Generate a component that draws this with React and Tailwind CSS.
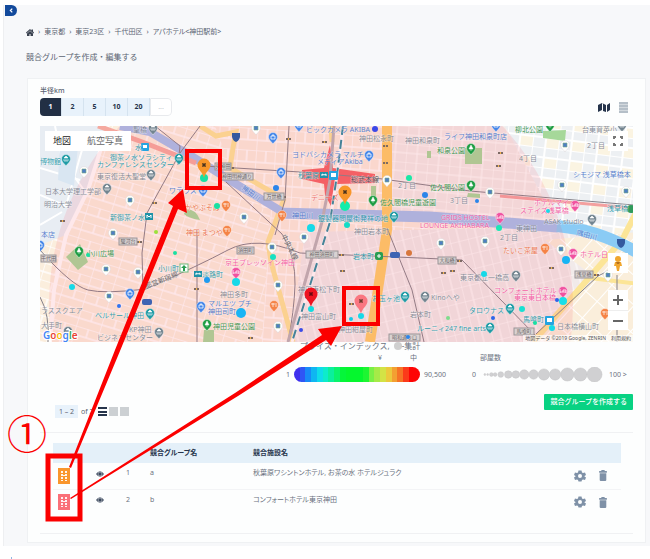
import React, { useState } from "react";

const BLUE = "#4a74c9";
const TEAL = "#2496a8";
const GREEN = "#2f8f45";
const GRAY = "#7d8490";
const PINK = "#f4559f";
const ORANGE = "#ec6f45";

// [text, x, y, color]
const labels = [
  ["聖橋", 133, 132, GRAY],
  ["水", 135, 150, TEAL],
  ["御茶ノ水ソラシティ", 110, 160, TEAL],
  ["カンファレンスセンター", 97, 167, TEAL],
  ["博物館", 40, 164, TEAL],
  ["東京復活大聖堂", 97, 179, GRAY],
  ["日本大学理工学部", 45, 194, GRAY],
  ["明治大学", 44, 207, GRAY],
  ["新御茶ノ水", 110, 220, TEAL],
  ["ワテラス", 169, 193, BLUE],
  ["かやぶそば", 185, 210, ORANGE],
  ["神田 まつや", 186, 235, ORANGE],
  ["本店", 41, 237, BLUE],
  ["小川広場", 86, 256, GREEN],
  ["小川町", 158, 271, TEAL],
  ["淡路町", 202, 277, TEAL],
  ["ラススクエア", 41, 313, GRAY],
  ["ベルサール神田", 95, 318, TEAL],
  ["KP神田", 129, 332, GRAY],
  ["ビジネスセンター", 97, 340, GRAY],
  ["大手町", 41, 328, GRAY],
  ["ビックカメラ AKIBA", 306, 132, BLUE],
  ["神田松永町", 359, 141, GRAY],
  ["神田和泉町", 405, 143, GRAY],
  ["ヨドバシカメラ マルチ", 292, 157, BLUE],
  ["メディアAkiba", 317, 164, BLUE],
  ["秋葉原", 298, 178, TEAL],
  ["総武本線", 351, 182, "#4b4b52"],
  ["デニーズ", 311, 200, "#ef6a64"],
  ["神田川", 292, 218, BLUE],
  ["佐久間橋児童遊園", 380, 205, GREEN],
  ["銀製器問屋街発祥の地", 318, 221, TEAL],
  ["神田岩本町", 354, 234, GRAY],
  ["2丁目", 398, 188, GRAY],
  ["京王プレッソイン神田", 225, 265, PINK],
  ["神田多町", 220, 297, GRAY],
  ["マルエツ プチ", 208, 306, BLUE],
  ["神田司町", 208, 314, BLUE],
  ["神田児童公園", 213, 329, GREEN],
  ["神田東松下町", 298, 292, GRAY],
  ["神田富山町", 301, 319, GRAY],
  ["岩本町", 353, 259, TEAL],
  ["お玉ヶ池", 372, 301, TEAL],
  ["岩本町", 410, 317, GRAY],
  ["神田紺屋町", 338, 332, GRAY],
  ["ルーニィ247 fine arts", 417, 331, TEAL],
  ["ライフ神田和泉町店", 444, 139, BLUE],
  ["柳北公園", 515, 132, GREEN],
  ["台東育英小", 582, 132, GRAY],
  ["和泉公園", 437, 153, GREEN],
  ["4丁目", 519, 161, GRAY],
  ["2丁目", 587, 148, GRAY],
  ["シモジマ 浅草橋本", 573, 177, BLUE],
  ["佐久間公園", 430, 190, GREEN],
  ["3丁目", 450, 203, GRAY],
  ["ホテルマイ", 534, 205, PINK],
  ["ステイズ浅草橋", 520, 213, PINK],
  ["浅草橋", 607, 211, TEAL],
  ["GRIDS HOSTEL", 441, 220, PINK],
  ["LOUNGE AKIHABARA", 420, 228, PINK],
  ["ASAK studio", 544, 224, GRAY],
  ["東神田", 516, 231, GRAY],
  ["2丁目", 500, 240, GRAY],
  ["たいこ茶屋", 503, 253, ORANGE],
  ["ホテル日", 580, 257, PINK],
  ["東京都立一橋高", 460, 280, GRAY],
  ["コンフォートホテル", 494, 293, PINK],
  ["東京東日本橋", 514, 300, PINK],
  ["Kinoへや", 431, 300, GRAY],
  ["タロウナス", 469, 313, TEAL],
  ["馬喰町", 523, 322, TEAL],
  ["日本橋横山町", 557, 329, GRAY],
];

const pinColors = {
  shop: "#4385e8",
  gray: "#72848f",
  teal: "#1f9ba5",
  park: "#1f9d44",
  food: "#f58346",
  hotel: "#f052a0",
  poi: "#ffffff",
};

// [kind, x, y]
const pins = [
  ["gray", 153, 128], ["teal", 179, 158], ["teal", 66, 159], ["poi", 84, 171],
  ["gray", 151, 174], ["gray", 107, 188], ["poi", 130, 200], ["shop", 203, 190],
  ["food", 226, 205], ["food", 227, 230], ["poi", 113, 233], ["shop", 40, 245],
  ["park", 79, 251], ["poi", 106, 269], ["poi", 138, 272], ["poi", 109, 296],
  ["shop", 130, 293], ["teal", 150, 313], ["gray", 159, 332], ["gray", 68, 331],
  ["shop", 201, 306], ["park", 207, 324], ["hotel", 236, 272], ["shop", 273, 137],
  ["shop", 299, 125], ["shop", 369, 155], ["shop", 281, 172], ["food", 282, 215],
  ["poi", 244, 217], ["poi", 256, 128], ["park", 373, 200], ["teal", 394, 216],
  ["poi", 387, 180], ["poi", 272, 247], ["poi", 278, 285], ["poi", 278, 326],
  ["poi", 304, 237], ["food", 274, 305], ["teal", 405, 296], ["gray", 425, 296],
  ["shop", 496, 125], ["park", 550, 125], ["gray", 622, 125], ["park", 471, 148],
  ["poi", 565, 145], ["park", 471, 185], ["poi", 490, 192], ["poi", 562, 185],
  ["poi", 626, 191], ["hotel", 575, 205], ["hotel", 500, 217], ["gray", 592, 219],
  ["poi", 441, 243], ["poi", 485, 241], ["food", 545, 248], ["poi", 561, 249],
  ["hotel", 573, 253], ["gray", 516, 275], ["hotel", 563, 291], ["teal", 510, 308],
  ["teal", 490, 327], ["food", 605, 313], ["poi", 608, 275],
];

// [x, y, r, color]
const dots = [
  [204, 178, 4, "#19e0a2"], [217, 206, 3, "#19e0a2"], [88, 255, 2, "#19e0a2"],
  [72, 287, 3, "#16d9e8"], [175, 253, 2, "#19e0a2"], [207, 280, 3, "#1f9bf0"],
  [119, 306, 2, "#3174f0"], [375, 129, 3, "#3b48e8"], [276, 188, 3, "#2b85ea"],
  [345, 206, 5, "#12edab"], [311, 228, 4, "#16d9e8"], [347, 225, 3, "#12dcc6"],
  [409, 178, 3, "#19e8a6"], [273, 257, 3, "#19e0c2"], [236, 282, 4, "#16d9e8"],
  [241, 313, 5, "#18b4f4"], [311, 309, 3, "#12dce0"], [361, 316, 3, "#16d9e8"],
  [351, 319, 2, "#16c9e8"], [301, 330, 2, "#3a4be8"], [408, 337, 2, "#2b85ea"],
  [409, 253, 3, "#d8773c"], [477, 201, 2, "#2b85ea"], [499, 228, 3, "#19e8b6"],
  [548, 211, 2, "#16d9e8"], [566, 260, 4, "#18b4f4"], [484, 274, 3, "#16d9e8"],
  [563, 301, 4, "#16dfe8"], [557, 300, 2, "#2b65ea"], [522, 309, 3, "#19e0d2"],
  [493, 318, 2, "#2b65ea"], [552, 328, 3, "#16d9e8"], [535, 323, 2, "#19e0a2"],
  [156, 232, 2, "#9be23c"], [425, 195, 3, "#2b85ea"], [448, 318, 2, "#7fdc8c"],
];

// street name plates: [text, x, y, width]
const plates = [
  ["駿河台", 119, 238, 18], ["千代田", 41, 255, 15], ["神田明神通り", 221, 173, 32],
  ["外神田", 215, 163, 16], ["万世橋", 264, 193, 20], ["須田町", 237, 247, 17],
  ["神田須田町", 306, 251, 32], ["大和橋", 438, 257, 18], ["浅草橋", 575, 271, 18],
  ["馬喰町", 514, 328, 20], ["昭和通り口", 389, 334, 31],
];

// traffic signals
const signals = [
  [63, 221], [155, 203], [289, 139], [325, 142], [386, 146], [386, 163], [284, 197],
  [501, 153], [499, 166], [343, 271], [342, 255], [444, 273], [453, 271], [552, 268],
  [460, 261], [197, 289], [251, 338], [140, 242], [232, 168], [597, 275], [352, 304],
];

function PinGlyph({ kind }) {
  if (kind === "poi") return <path d="M-2-2h4v4h-4z" fill="#4f7fc4" stroke="#7cab84" strokeWidth="0.600" />;
  if (kind === "food") return <path d="M-2-2v2M-1-2v4M0-2v2M2-2v4" stroke="#fff" fill="none" strokeWidth="0.700" />;
  if (kind === "hotel") return <path d="M-3-2v4M-3 1h6v-2h-3v2M3 1v1" stroke="#fff" fill="none" strokeWidth="0.800" />;
  if (kind === "park") return <path d="M0-3l2 4h-4zM0 1v2" stroke="#fff" fill="#fff" strokeWidth="0.500" />;
  if (kind === "shop") return <path d="M-2-1h4v3h-4zM-1-1q1-3 2 0" stroke="#fff" fill="none" strokeWidth="0.800" />;
  return <path d="M0-3l2 2h-4zM-2 0v2M0 0v2M2 0v2M-2 2h4" stroke="#fff" fill="#fff" strokeWidth="0.600" />;
}

function Pin({ kind, x, y }) {
  return (
    <g transform={`translate(${x} ${y})`}>
      <path
        d="M0 7C-1 5-4.500 3-4.500 0A4.500 4.500 0 0 1 4.500 0C4.500 3 1 5 0 7z"
        fill={pinColors[kind]}
        stroke={kind === "poi" ? "#d3ccd0" : "#ffffff"}
        strokeWidth="0.400"
      />
      <PinGlyph kind={kind} />
    </g>
  );
}

function Marker({ x, y, color, core }) {
  return (
    <g transform={`translate(${x} ${y})`}>
      <path d="M0 13C-1 7-6.500 5-6.500 0A6.500 6.500 0 0 1 6.500 0C6.500 5 1 7 0 13z" fill={color} />
      <path d="M-1-1h2v2h-2zM0-2v4M-2 0h4M-2-2l4 4M2-2l-4 4" fill={core} stroke={core} strokeWidth="0.700" />
    </g>
  );
}

function CityMap() {
  return (
    <svg
      viewBox="40 126 593 216"
      preserveAspectRatio="xMidYMid slice"
      className="block h-[216px] w-full font-['Noto_Sans','Noto_Sans_CJK_JP',sans-serif] text-[7px]"
      role="img"
      aria-label="地図"
    >
      <defs>
        <pattern id="west" width="24" height="17" patternUnits="userSpaceOnUse" patternTransform="rotate(17)">
          <rect width="24" height="17" fill="#fbeedd" />
          <path d="M0 0H24M0 0V17M13 0V9M0 9H24" stroke="#ffffff" strokeWidth="1.500" fill="none" />
        </pattern>
        <pattern id="center" width="19" height="22" patternUnits="userSpaceOnUse" patternTransform="rotate(4)">
          <rect width="19" height="22" fill="#fbecdd" />
          <path d="M0 0H19M0 0V22M0 12H19M10 0V12" stroke="#ffffff" strokeWidth="1.500" fill="none" />
        </pattern>
        <pattern id="south" width="18" height="15" patternUnits="userSpaceOnUse" patternTransform="rotate(-14)">
          <rect width="18" height="15" fill="#f1eaea" />
          <path d="M0 0H18M0 0V15M9 0V15" stroke="#ffffff" strokeWidth="1" fill="none" />
        </pattern>
        <pattern id="northeast" width="22" height="18" patternUnits="userSpaceOnUse" patternTransform="rotate(5)">
          <rect width="22" height="18" fill="#f3ebe8" />
          <path d="M0 0H22M0 0V18M0 9H22M11 0V18" stroke="#ffffff" strokeWidth="1" fill="none" />
        </pattern>
        <pattern id="east" width="26" height="20" patternUnits="userSpaceOnUse" patternTransform="rotate(7)">
          <rect width="26" height="20" fill="#edf0f3" />
          <rect x="13" y="10" width="13" height="10" fill="#fbf4e2" />
          <path d="M0 0H26M0 0V20M0 10H26M13 0V20" stroke="#ffffff" strokeWidth="2" fill="none" />
        </pattern>
        <pattern id="southeast" width="15" height="22" patternUnits="userSpaceOnUse" patternTransform="rotate(42)">
          <rect width="15" height="22" fill="#faeedb" />
          <path d="M0 0H15M0 0V22" stroke="#ffffff" strokeWidth="2" fill="none" />
        </pattern>
      </defs>

      {/* blocks and streets */}
      <rect x="40" y="126" width="593" height="216" fill="url(#center)" />
      <path d="M40 126H215L235 180L270 215L262 342H40z" fill="url(#west)" />
      <path d="M305 232L640 225V342H290z" fill="url(#south)" />
      <path d="M392 126H560V226L392 217z" fill="url(#northeast)" />
      <path d="M505 126H640V240L558 226z" fill="url(#east)" />
      <path d="M545 240L640 232V342H530L596 278z" fill="url(#southeast)" />
      <path d="M40 126H108L88 190L66 235L40 245z" fill="#e8edf3" />
      <path d="M40 195L66 206L82 150M40 225L62 212M55 126L62 160L84 190M40 168L80 180" stroke="#fff" strokeWidth="2" fill="none" />
      <path d="M108 126L88 190L66 235L54 290L50 342" stroke="#fff" strokeWidth="4" fill="none" />
      <path d="M60 142L78 146L74 186L58 180z" fill="#d9e6f2" />

      {/* parks */}
      <g fill="#a6d89a">
        <path d="M80 244L88 262L78 270L66 257z" />
        <path d="M186 209Q196 209 200 220Q188 218 184 214z" />
        <path d="M465 148H482V164H465zM543 131L566 130L565 141L543 138zM468 193L480 194L480 198L467 197z" />
        <path d="M204 330H214V342H203zM371 186H376V204H371zM427 151H431V158H427z" />
      </g>

      {/* main roads */}
      <g fill="none" stroke="#fce597">
        <path d="M284 199L268 242L271 262L293 342" strokeWidth="5" />
        <path d="M200 126L216 136L236 132L233 148L230 168L284 199" strokeWidth="5" />
        <path d="M331 126L332 142" strokeWidth="5" />
        <path d="M640 205L622 240L533 342" strokeWidth="6" />
        <path d="M590 278L640 284" strokeWidth="4" />
      </g>

      {/* river */}
      <path d="M120 126L150 132L193 157L236 184L281 211" stroke="#a5c0ee" strokeWidth="8" fill="none" />
      <path d="M278 213L430 217L558 227" stroke="#a5c0ee" strokeWidth="11" fill="none" />
      <path d="M557 226Q600 230 640 254" stroke="#8acbf5" strokeWidth="12" fill="none" />
      <path d="M387 126V230L370 342" stroke="#fdcd68" strokeWidth="10" fill="none" />

      {/* railways */}
      <path d="M98 126L145 143L196 163" stroke="#f5a99f" strokeWidth="5" fill="none" />
      <path d="M330 145L333 168L375 174V183L337 184L331 206L325 195L324 184L302 179V170L324 168z" fill="#f46366" />
      <path d="M500 196L633 208" stroke="#f3a09f" strokeWidth="3" fill="none" />
      <g fill="none" stroke="#85828a" strokeWidth="1">
        <path d="M155 126L180 146L178 165M200 126L180 153L147 213L142 253L143 290" />
        <path d="M40 250Q72 286 88 290T146 289Q200 265 228 250T300 253L420 258L462 260L536 336" />
        <path d="M204 166L300 172L375 178L470 191L633 205" />
        <path d="M289 126L285 200L275 235M197 230V342M40 297Q50 315 48 342" />
        <path d="M387 228L412 290L424 342M536 334L598 276L614 268M617 275V342" />
        <path d="M226 182L282 234Q296 258 295 285T288 342" />
      </g>
      <path d="M334 126L330 180L322 222L288 342" stroke="#b9b2b7" strokeWidth="3" fill="none" />
      <path d="M343 126L337 175L330 222L292 342" stroke="#ffffff" strokeWidth="3" fill="none" />
      <path d="M343 126L337 175L330 222L292 342" stroke="#2b8ca0" strokeWidth="2" strokeDasharray="9 5" fill="none" />

      {/* search radius */}
      <circle cx="311" cy="305" r="262" fill="#fa4a62" fillOpacity="0.130" />

      {signals.map(([x, y], i) => (
        <g key={i}>
          <rect x={x - 3} y={y - 1} width="5" height="2" fill="#7d6a64" />
          <rect x={x - 1} y={y - 1} width="1" height="2" fill="#f3b24a" />
        </g>
      ))}

      {plates.map(([text, x, y, w], i) => (
        <g key={i}>
          <rect x={x} y={y} width={w} height="7" fill="#d9d2d2" stroke="#9a9496" strokeWidth="1" />
          <text x={x + w / 2} y={y + 5} textAnchor="middle" fontSize="5" fill="#6b6668">{text}</text>
        </g>
      ))}

      {/* station badges */}
      <g>
        <rect x="141" y="143" width="8" height="8" rx="1" fill="#25a4e0" />
        <path d="M143 145h4v3h-4z" fill="#fff" />
        <rect x="145" y="213" width="8" height="7" fill="#1f93a8" />
        <path d="M147 218v-3l2 2l2-2v3" stroke="#fff" fill="none" strokeWidth="1" />
        <rect x="320" y="172" width="8" height="6" fill="#1f93a8" />
        <path d="M322 176v-2l2 1l2-1v2" stroke="#fff" fill="none" strokeWidth="1" />
        <rect x="329" y="171" width="9" height="9" rx="1" fill="#25a4e0" />
        <path d="M331 173h5v4h-5z" fill="#fff" />
        <rect x="194" y="271" width="8" height="6" fill="#1f93a8" />
        <path d="M196 275v-2l2 1l2-1v2" stroke="#fff" fill="none" strokeWidth="1" />
        <rect x="545" y="316" width="9" height="9" rx="1" fill="#25a4e0" />
        <path d="M547 318h5v4h-5z" fill="#fff" />
        <rect x="375" y="252" width="8" height="8" rx="2" fill="#2a9d52" />
        <path d="M377 256h4M379 254v4" stroke="#fff" strokeWidth="1" />
        <rect x="180" y="264" width="8" height="8" fill="#fff" stroke="#6cbb7f" strokeWidth="1" />
        <path d="M184 265l3 3h-2v3h-2v-3h-2z" fill="#2a9d52" />
        <rect x="142" y="299" width="10" height="6" rx="2" fill="#3d63b3" />
        <rect x="390" y="252" width="10" height="6" rx="2" fill="#3d63b3" />
        <path d="M232 133h8v4q-1 4-4 5q-3-1-4-5zM617 239h8v4q-1 4-4 5q-3-1-4-5z" fill="#33599f" />
        <circle cx="631" cy="209" r="4" fill="#2f9b5b" />
      </g>

      {pins.map(([kind, x, y], i) => <Pin key={i} kind={kind} x={x} y={y} />)}

      <g stroke="#ffffff" strokeWidth="1" strokeOpacity="0.500" paintOrder="stroke" opacity="0.900">
        {labels.map(([text, x, y, color], i) => (
          <text key={i} x={x} y={y} fill={color}>{text}</text>
        ))}
        <text transform="translate(241 189) rotate(36)" fill={BLUE}>神田川</text>
        <text transform="translate(146 289) rotate(-22)" fill="#5b575c">都営新宿線</text>
        <text transform="translate(281 236) rotate(62)" fill="#5b575c">中央本線</text>
        <text transform="translate(576 235) rotate(14)" fill={BLUE}>隅田川</text>
      </g>

      {dots.map(([x, y, r, color], i) => <circle key={i} cx={x} cy={y} r={r} fill={color} />)}

      <Marker x={204} y={165} color="#f8962a" core="#4b3320" />
      <Marker x={345} y={192} color="#f8962a" core="#4b3320" />
      <Marker x={311} y={294} color="#ee1320" core="#6d0710" />
      <Marker x={361} y={301} color="#fa7681" core="#6d3a2c" />

      <g fontSize="10" fontWeight="600" stroke="#ffffff" strokeWidth="2" paintOrder="stroke">
        <text x="43" y="339">
          <tspan fill="#4285f4">G</tspan>
          <tspan fill="#ea4335">o</tspan>
          <tspan fill="#fbbc05">o</tspan>
          <tspan fill="#4285f4">g</tspan>
          <tspan fill="#34a853">l</tspan>
          <tspan fill="#ea4335">e</tspan>
        </text>
      </g>
      <rect x="523" y="335" width="110" height="7" fill="#ffffff" fillOpacity="0.650" />
      <text x="631" y="340" textAnchor="end" fontSize="5" fill="#555">
        地図データ ©2019 Google, ZENRIN　利用規約
      </text>
    </svg>
  );
}

function MapPanel() {
  return (
    <div className="relative mt-[10px]">
      <CityMap />
      <div className="absolute left-[5px] top-[5px] flex h-5 items-center bg-white text-[9px] text-[#666]">
        <button className="px-2 text-[#222]">地図</button>
        <button className="px-2">航空写真</button>
      </div>
      <button aria-label="全画面表示" className="absolute right-[5px] top-[5px] flex size-5 items-center justify-center bg-white">
        <svg viewBox="0 0 12 12" className="size-3" fill="none" stroke="#777" strokeWidth="2">
          <path d="M2 4V2H4M8 2H10V4M10 8V10H8M4 10H2V8" />
        </svg>
      </button>
      <div className="absolute right-[5px] top-[127px] flex flex-col gap-[17px]">
        <button aria-label="ストリートビュー" className="flex size-5 items-center justify-center bg-white">
          <svg viewBox="0 0 12 16" className="h-4 w-3">
            <circle cx="6" cy="4" r="3" fill="#f0a52c" />
            <path d="M3 7h6l1 4H8l-1 5H5l-1-5H2z" fill="#f0a52c" />
            <path d="M4 7h4l-1 2H5z" fill="#b5701d" />
          </svg>
        </button>
        <div className="flex flex-col bg-white">
          <button aria-label="拡大" className="flex size-5 items-center justify-center">
            <svg viewBox="0 0 10 10" className="size-[10px]" stroke="#666" strokeWidth="2"><path d="M0 5H10M5 0V10" /></svg>
          </button>
          <button aria-label="縮小" className="flex size-5 items-center justify-center border-t border-[#eee]">
            <svg viewBox="0 0 10 10" className="size-[10px]" stroke="#666" strokeWidth="2"><path d="M0 5H10" /></svg>
          </button>
        </div>
      </div>
    </div>
  );
}

const scale = [
  "#3f30ee", "#2f55f5", "#178af7", "#0fb6f1", "#0fdcea", "#0deccb", "#0bef9d", "#09f36c",
  "#05f63a", "#05f72e", "#05f72e", "#05f72e", "#1df632", "#79f046", "#a6ea48", "#d3e345",
  "#ecc93c", "#f3a032", "#f67426", "#fb3a1a", "#fe0505", "#fe0505",
];

// [cx, r]
const roomDots = [
  [3, 1], [6, 1], [10, 2], [14, 2], [20, 3], [28, 4], [36, 4], [45, 5],
  [55, 5], [66, 6], [78, 6], [91, 7], [105, 7], [120, 8],
];

function Legend() {
  return (
    <div className="flex justify-end gap-5 text-[7px] leading-[8px] text-[#6b7280]">
      <div className="w-[166px]">
        <div className="flex items-center whitespace-nowrap pl-[14px] text-[8px]">
          プライス・インデックス,
          <span className="ml-1 size-2 rounded-full bg-[#cfcfcf]" />
          -集計
        </div>
        <div className="mt-1 flex pl-[92px]">
          <span className="w-8">¥</span>
          <span>中</span>
        </div>
        <div className="mt-[5px] flex items-center gap-1">
          <span>1</span>
          <div className="flex h-[15px] w-[126px] overflow-hidden rounded-full">
            {scale.map((c, i) => <span key={i} className="flex-1" style={{ background: c }} />)}
          </div>
          <span>90,500</span>
        </div>
      </div>
      <div className="w-[161px]">
        <div className="mt-3 pl-2">部屋数</div>
        <div className="mt-[5px] flex items-center gap-[2px]">
          <span>0</span>
          <svg viewBox="0 0 129 16" className="h-[15px] w-[129px]" fill="#d0d0d2" stroke="#c2c2c5" strokeWidth="0.500">
            {roomDots.map(([cx, r]) => <circle key={cx} cx={cx} cy="8" r={r} />)}
          </svg>
          <span className="whitespace-nowrap">100 &gt;</span>
        </div>
      </div>
    </div>
  );
}

const groups = [
  { no: 1, name: "a", hotels: "秋葉原ワシントンホテル, お茶の水 ホテルジュラク", bg: "bg-[#f9962d]" },
  { no: 2, name: "b", hotels: "コンフォートホテル東京神田", bg: "bg-[#fa7078]" },
];

function BuildingIcon() {
  return (
    <svg viewBox="0 0 8 10" className="h-[10px] w-2" fill="#ffffff" fillOpacity="0.900" shapeRendering="crispEdges">
      <path d="M1 0h2v2H1zM5 0h2v2H5zM1 3h2v2H1zM5 3h2v2H5zM1 6h2v2H1zM5 6h2v2H5zM1 9h2v1H1zM5 9h2v1H5zM3 4h2v1H3z" />
    </svg>
  );
}

function EyeIcon() {
  return (
    <svg viewBox="0 0 16 12" className="h-[6px] w-2">
      <path d="M0 6Q8-5 16 6Q8 17 0 6z" fill="#3a475c" />
      <circle cx="8" cy="6" r="4" fill="none" stroke="#fff" strokeWidth="1" />
    </svg>
  );
}

function GearIcon() {
  return (
    <svg viewBox="0 0 24 24" className="size-3" fill="#7f91a7">
      <path fillRule="evenodd" d="M9 1h6l1 4 2 1 4-1 2 5-3 2v1l3 2-2 5-4-1-2 1-1 3H9l-1-3-2-1-4 1-2-5 3-2v-1L0 10l2-5 4 1 2-1zM12 8a4 4 0 1 0 0 8a4 4 0 1 0 0-8z" />
    </svg>
  );
}

function TrashIcon() {
  return (
    <svg viewBox="0 0 14 20" className="h-[11px] w-2" fill="#7f91a7">
      <path d="M4 0h6v2h4v3H0V2h4zM1 6h12v12q0 2-2 2H3q-2 0-2-2z" />
    </svg>
  );
}

function GroupTable() {
  return (
    <table className="w-full table-fixed text-left text-[7px] leading-[8px] text-[#6b7280] [font-feature-settings:'palt']">
      <colgroup>
        <col className="w-[43px]" />
        <col className="w-[30px]" />
        <col className="w-6" />
        <col className="w-[103px]" />
        <col />
        <col className="w-7" />
        <col className="w-[22px]" />
      </colgroup>
      <thead className="bg-[#e4f0f9] text-[#26344b]">
        <tr className="h-[20px]">
          <th /><th /><th />
          <th className="font-bold">競合グループ名</th>
          <th className="font-bold">競合施設名</th>
          <th /><th />
        </tr>
      </thead>
      <tbody>
        {groups.map((g) => (
          <tr key={g.no} className="h-[26px] border-b border-[#f3f4f6] last:border-0">
            <td className="pl-[5px]">
              <div className={`flex h-4 w-3 items-center justify-center ${g.bg}`}>
                <BuildingIcon />
              </div>
            </td>
            <td>
              <button aria-label={`${g.name} を表示`} className="flex pb-1"><EyeIcon /></button>
            </td>
            <td className="pb-[5px]">{g.no}</td>
            <td className="pb-[5px]">{g.name}</td>
            <td className="pb-[5px]">{g.hotels}</td>
            <td><button aria-label={`${g.name} を編集`} className="flex pl-[3px]"><GearIcon /></button></td>
            <td><button aria-label={`${g.name} を削除`} className="flex"><TrashIcon /></button></td>
          </tr>
        ))}
      </tbody>
    </table>
  );
}

// 吹き出し・矢印
function Callouts() {
  return (
    <svg viewBox="0 0 650 559" className="pointer-events-none absolute left-0 top-0 h-[559px] w-[650px]">
      <g fill="none" stroke="#fb0000">
        <rect x="187" y="151" width="33" height="37" strokeWidth="4" />
        <rect x="344" y="288" width="34" height="36" strokeWidth="4" />
        <rect x="48" y="456" width="32" height="63" strokeWidth="5" />
      </g>
      <g fill="#fb0000">
        <path d="M71 468L69 467L115 350L173 206L168 203L183 189L187 213L178 209L120 351z" />
        <path d="M71 499L70 498L235 393L322 335L318 329L342 326L331 346L326 340L238 396z" />
        <text x="27" y="449" textAnchor="middle" fontSize="40" className="font-['Noto_Sans_CJK_JP',sans-serif]">①</text>
      </g>
    </svg>
  );
}

export default function App() {
  const [radius, setRadius] = useState(1);
  const crumbs = ["東京都", "東京23区", "千代田区", "アパホテル<神田駅前>"];

  return (
    <div className="relative bg-white pl-[3px] pt-[5px] font-['Noto_Sans','Noto_Sans_CJK_JP',sans-serif] text-[#5b6472]">
      <main className="border-l border-[#eeeff1] bg-[#f7f8fa] pb-[3px] pl-[1px] pr-1">
        <button aria-label="メニューを閉じる" className="flex h-[11px] w-3 items-center justify-center rounded-r-md bg-[#134a9c]">
          <svg viewBox="0 0 6 8" className="h-[5px] w-1" fill="none" stroke="#fff" strokeWidth="2"><path d="M5 1L2 4L5 7" /></svg>
        </button>

        <nav className="mt-[10px] flex h-3 items-center gap-1 pl-[21px] text-[7px] leading-3 [font-feature-settings:'palt']">
          <a href="#" aria-label="ホーム">
            <svg viewBox="0 0 16 14" className="h-[7px] w-2" fill="#3a4250">
              <path d="M8 0L0 7l1 2 7-6 7 6 1-2-2-2V1h-3v2zM8 4l6 5v5H9v-4H7v4H2V9z" />
            </svg>
          </a>
          {crumbs.map((c) => (
            <React.Fragment key={c}>
              <span>›</span>
              <a href="#">{c}</a>
            </React.Fragment>
          ))}
        </nav>

        <h1 className="mt-[13px] h-3 pl-[21px] text-[8px] leading-3">競合グループを作成・編集する</h1>

        <section className="ml-[22px] mt-[15px] border border-[#eff1f3] bg-[#fdfefe] px-3 pb-2 pt-2">
          <div className="text-[7px] font-medium leading-[8px]">半径km</div>
          <div className="mt-[3px] flex items-center justify-between">
            <div className="flex h-[18px] overflow-hidden rounded-sm text-[7px] font-bold text-[#26344b]">
              {[1, 2, 5, 10, 20].map((r) => (
                <button
                  key={r}
                  onClick={() => setRadius(r)}
                  className={`w-[22px] border-r border-[#d5e3ef] ${radius === r ? "bg-[#222f44] text-white" : "bg-[#e8f2fb]"}`}
                >
                  {r}
                </button>
              ))}
              <input aria-label="半径を入力" placeholder="..." className="w-[22px] rounded-r-sm border border-[#e8eaed] bg-white text-center font-normal placeholder:text-[#c5c9cf]" />
            </div>
            <div className="flex items-center gap-[9px] pr-[5px]">
              <button aria-label="地図表示">
                <svg viewBox="0 0 12 9" className="h-[9px] w-3" fill="#26344b">
                  <path d="M0 2l4-2v7l-4 2zM4 0l4 2v7L5 8V1zM9 2l3-2v7L9 9z" />
                </svg>
              </button>
              <button aria-label="リスト表示">
                <svg viewBox="0 0 9 11" className="h-[11px] w-[9px]">
                  <path d="M0 0h9v11H0z" fill="#d3d9de" />
                  <path d="M0 0h9v2H0zM0 3h9v2H0zM0 6h9v2H0zM0 9h9v2H0z" fill="#b5bfc8" />
                </svg>
              </button>
            </div>
          </div>

          <MapPanel />
          <Legend />

          <div className="mt-3 flex h-6 justify-between">
            <div className="ml-[15px] flex items-center self-end text-[7px] leading-[13px]">
              <span className="w-[23px] bg-[#e8f2fb] text-center">1 – 2</span>
              <span className="ml-[3px] w-[17px]">of 2</span>
              <button aria-label="行表示">
                <svg viewBox="0 0 9 9" className="size-[9px]" fill="#26344b"><path d="M0 0h9v2H0zM0 4h9v2H0zM0 7h9v2H0z" /></svg>
              </button>
              <button aria-label="2列表示" className="ml-[2px] size-[9px] bg-[#ccd0d3]" />
              <button aria-label="3列表示" className="ml-[2px] size-[9px] bg-[#ccd0d3]" />
            </div>
            <button className="h-4 self-start rounded-[1px] bg-[#08d283] px-[6px] text-[7px] font-medium leading-4 text-white">
              競合グループを作成する
            </button>
          </div>

          <div className="mt-[14px] border-y border-[#f0f1f3] pb-[18px] pl-[13px] pr-3 pt-[10px]">
            <GroupTable />
          </div>
        </section>
      </main>
      <div className="ml-[8px] mt-[11px] h-[3px] w-px bg-[#8fb7e3]" />
      <Callouts />
    </div>
  );
}
